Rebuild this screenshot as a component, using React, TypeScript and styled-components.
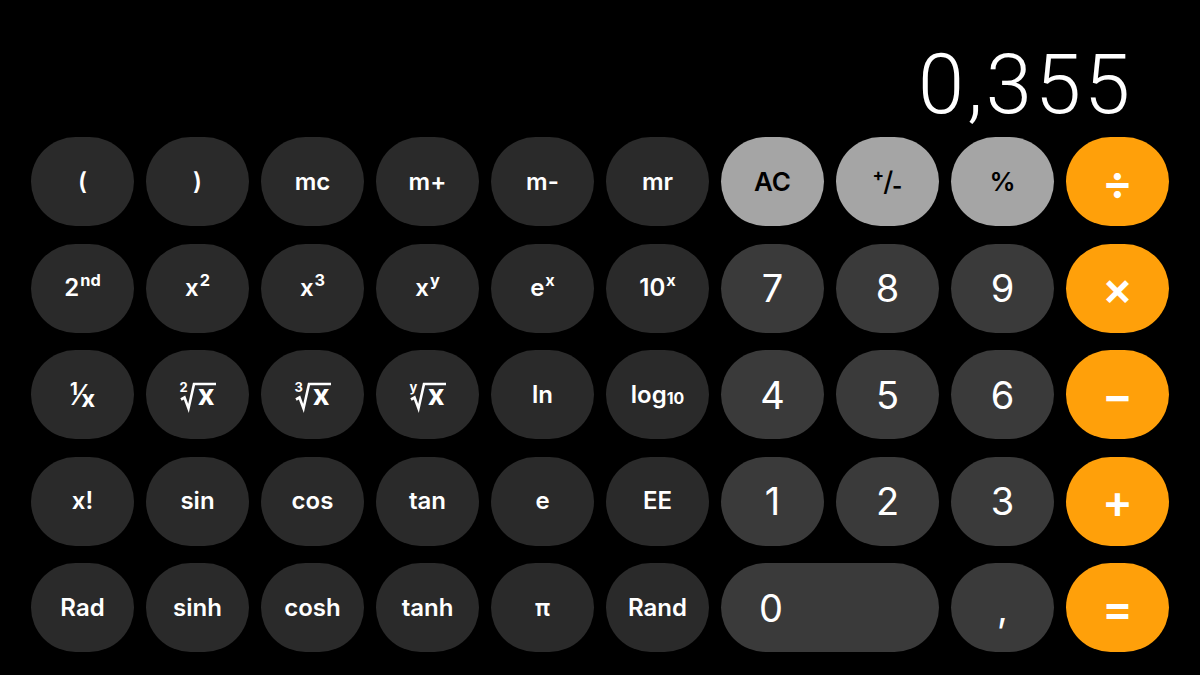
import React from "react";
import styled, { createGlobalStyle, css } from "styled-components";

const GlobalStyle = createGlobalStyle`
  html, body {
    margin: 0;
    padding: 0;
    background: #000;
  }
  body {
    font-family: Inter, "Noto Sans", "Liberation Sans", sans-serif;
    -webkit-font-smoothing: antialiased;
  }
`;

type Kind = "fn" | "digit" | "gray" | "op";

const Page = styled.div`
  width: 1200px;
  height: 675px;
  background: #000;
  display: flex;
  flex-direction: column;
  overflow: hidden;
`;

const Display = styled.div`
  height: 137px;
  box-sizing: border-box;
  display: flex;
  align-items: flex-end;
  justify-content: flex-end;
  padding: 0 70px 11px 0;
`;

const DisplayValue = styled.span`
  color: #fff;
  font-family: Roboto, Inter, sans-serif;
  font-weight: 300;
  font-size: 83px;
  letter-spacing: 3px;
  margin-right: -3px;
  line-height: 1;
`;

const Keypad = styled.div`
  display: grid;
  grid-template-columns: repeat(10, 103px);
  grid-auto-rows: 89px;
  column-gap: 12px;
  row-gap: 17.5px;
  padding-left: 31px;
`;

const kindStyles = {
  fn: css`
    background: #2a2a2a;
    color: #fff;
    font-size: 24px;
    font-weight: 600;
  `,
  digit: css`
    background: #3a3a3a;
    color: #fff;
    font-size: 38px;
    font-weight: 400;
  `,
  gray: css`
    background: #a5a5a5;
    color: #000;
    font-size: 26px;
    font-weight: 600;
  `,
  op: css`
    background: #ffa00a;
    color: #fff;
    font-size: 46px;
    font-weight: 600;
  `,
};

const Key = styled.button<{ $kind: Kind; $wide?: boolean }>`
  border: none;
  border-radius: 999px;
  font-family: Inter, "Noto Sans", sans-serif;
  display: flex;
  align-items: center;
  justify-content: center;
  padding: 0;
  cursor: pointer;
  line-height: 1;
  ${(p) => kindStyles[p.$kind]}
  ${(p) =>
    p.$wide &&
    css`
      grid-column: span 2;
      justify-content: flex-start;
      padding-left: 38px;
    `}
`;

const Sup = styled.span`
  font-size: 0.68em;
  font-weight: 700;
  position: relative;
  top: -0.5em;
  margin-left: 1px;
`;

const Sub = styled.span`
  font-size: 0.66em;
  font-weight: 700;
  position: relative;
  top: 0.3em;
`;

/* small raised / lowered parts of 1/x and +/- */
const Stack = styled.span`
  display: inline-flex;
  align-items: center;
  font-weight: 700;
`;

const Raised = styled.span<{ $size: number }>`
  font-size: ${(p) => p.$size}px;
  position: relative;
  top: -6px;
`;

const Lowered = styled.span<{ $size: number }>`
  font-size: ${(p) => p.$size}px;
  position: relative;
  top: 4px;
`;

const Slash = styled.span<{ $size: number }>`
  font-size: ${(p) => p.$size}px;
  font-weight: 500;
  margin: 0 -1px;
`;

const Root = styled.span`
  display: inline-flex;
  justify-content: space-between;
  width: 36px;
  height: 28px;
  position: relative;
  margin-top: 2px;
`;

const RadicalSign = styled.svg`
  position: absolute;
  inset: 0;
  overflow: visible;
`;

const RootIndex = styled.span`
  font-size: 13px;
  font-weight: 700;
  line-height: 1;
  align-self: flex-start;
  margin-top: -1px;
`;

const Radicand = styled.span`
  font-size: 29px;
  font-weight: 700;
  line-height: 1;
  align-self: flex-end;
  margin-bottom: 1px;
  margin-right: 1px;
`;

type KeyDef = { label: React.ReactNode; kind: Kind; wide?: boolean };

const rootKey = (index: string) => (
  <Root>
    <RadicalSign width="36" height="28" viewBox="0 0 36 28">
      <path
        d="M1 17.5 L4.5 15.5 L8.5 26.5 L14 2 L36 2"
        fill="none"
        stroke="#fff"
        strokeWidth="2.6"
        strokeLinejoin="miter"
      />
    </RadicalSign>
    <RootIndex>{index}</RootIndex>
    <Radicand>x</Radicand>
  </Root>
);

const keys: KeyDef[] = [
  { label: "(", kind: "fn" },
  { label: ")", kind: "fn" },
  { label: "mc", kind: "fn" },
  { label: "m+", kind: "fn" },
  { label: "m-", kind: "fn" },
  { label: "mr", kind: "fn" },
  { label: "AC", kind: "gray" },
  {
    label: (
      <Stack>
        <Raised $size={17}>+</Raised>
        <Slash $size={27}>/</Slash>
        <Lowered $size={22}>-</Lowered>
      </Stack>
    ),
    kind: "gray",
  },
  { label: "%", kind: "gray" },
  { label: "÷", kind: "op" },

  { label: <>2<Sup>nd</Sup></>, kind: "fn" },
  { label: <>x<Sup>2</Sup></>, kind: "fn" },
  { label: <>x<Sup>3</Sup></>, kind: "fn" },
  { label: <>x<Sup>y</Sup></>, kind: "fn" },
  { label: <>e<Sup>x</Sup></>, kind: "fn" },
  { label: <>10<Sup>x</Sup></>, kind: "fn" },
  { label: "7", kind: "digit" },
  { label: "8", kind: "digit" },
  { label: "9", kind: "digit" },
  { label: "×", kind: "op" },

  {
    label: (
      <Stack>
        <Raised $size={18}>1</Raised>
        <Slash $size={28}>⁄</Slash>
        <Lowered $size={24}>x</Lowered>
      </Stack>
    ),
    kind: "fn",
  },
  { label: rootKey("2"), kind: "fn" },
  { label: rootKey("3"), kind: "fn" },
  { label: rootKey("y"), kind: "fn" },
  { label: "ln", kind: "fn" },
  { label: <>log<Sub>10</Sub></>, kind: "fn" },
  { label: "4", kind: "digit" },
  { label: "5", kind: "digit" },
  { label: "6", kind: "digit" },
  { label: "−", kind: "op" },

  { label: "x!", kind: "fn" },
  { label: "sin", kind: "fn" },
  { label: "cos", kind: "fn" },
  { label: "tan", kind: "fn" },
  { label: "e", kind: "fn" },
  { label: "EE", kind: "fn" },
  { label: "1", kind: "digit" },
  { label: "2", kind: "digit" },
  { label: "3", kind: "digit" },
  { label: "+", kind: "op" },

  { label: "Rad", kind: "fn" },
  { label: "sinh", kind: "fn" },
  { label: "cosh", kind: "fn" },
  { label: "tanh", kind: "fn" },
  { label: "π", kind: "fn" },
  { label: "Rand", kind: "fn" },
  { label: "0", kind: "digit", wide: true },
  { label: ",", kind: "digit" },
  { label: "=", kind: "op" },
];

export default function App() {
  return (
    <Page>
      <GlobalStyle />
      <Display>
        <DisplayValue>0,355</DisplayValue>
      </Display>
      <Keypad>
        {keys.map((k, i) => (
          <Key key={i} $kind={k.kind} $wide={k.wide}>
            {k.label}
          </Key>
        ))}
      </Keypad>
    </Page>
  );
}
